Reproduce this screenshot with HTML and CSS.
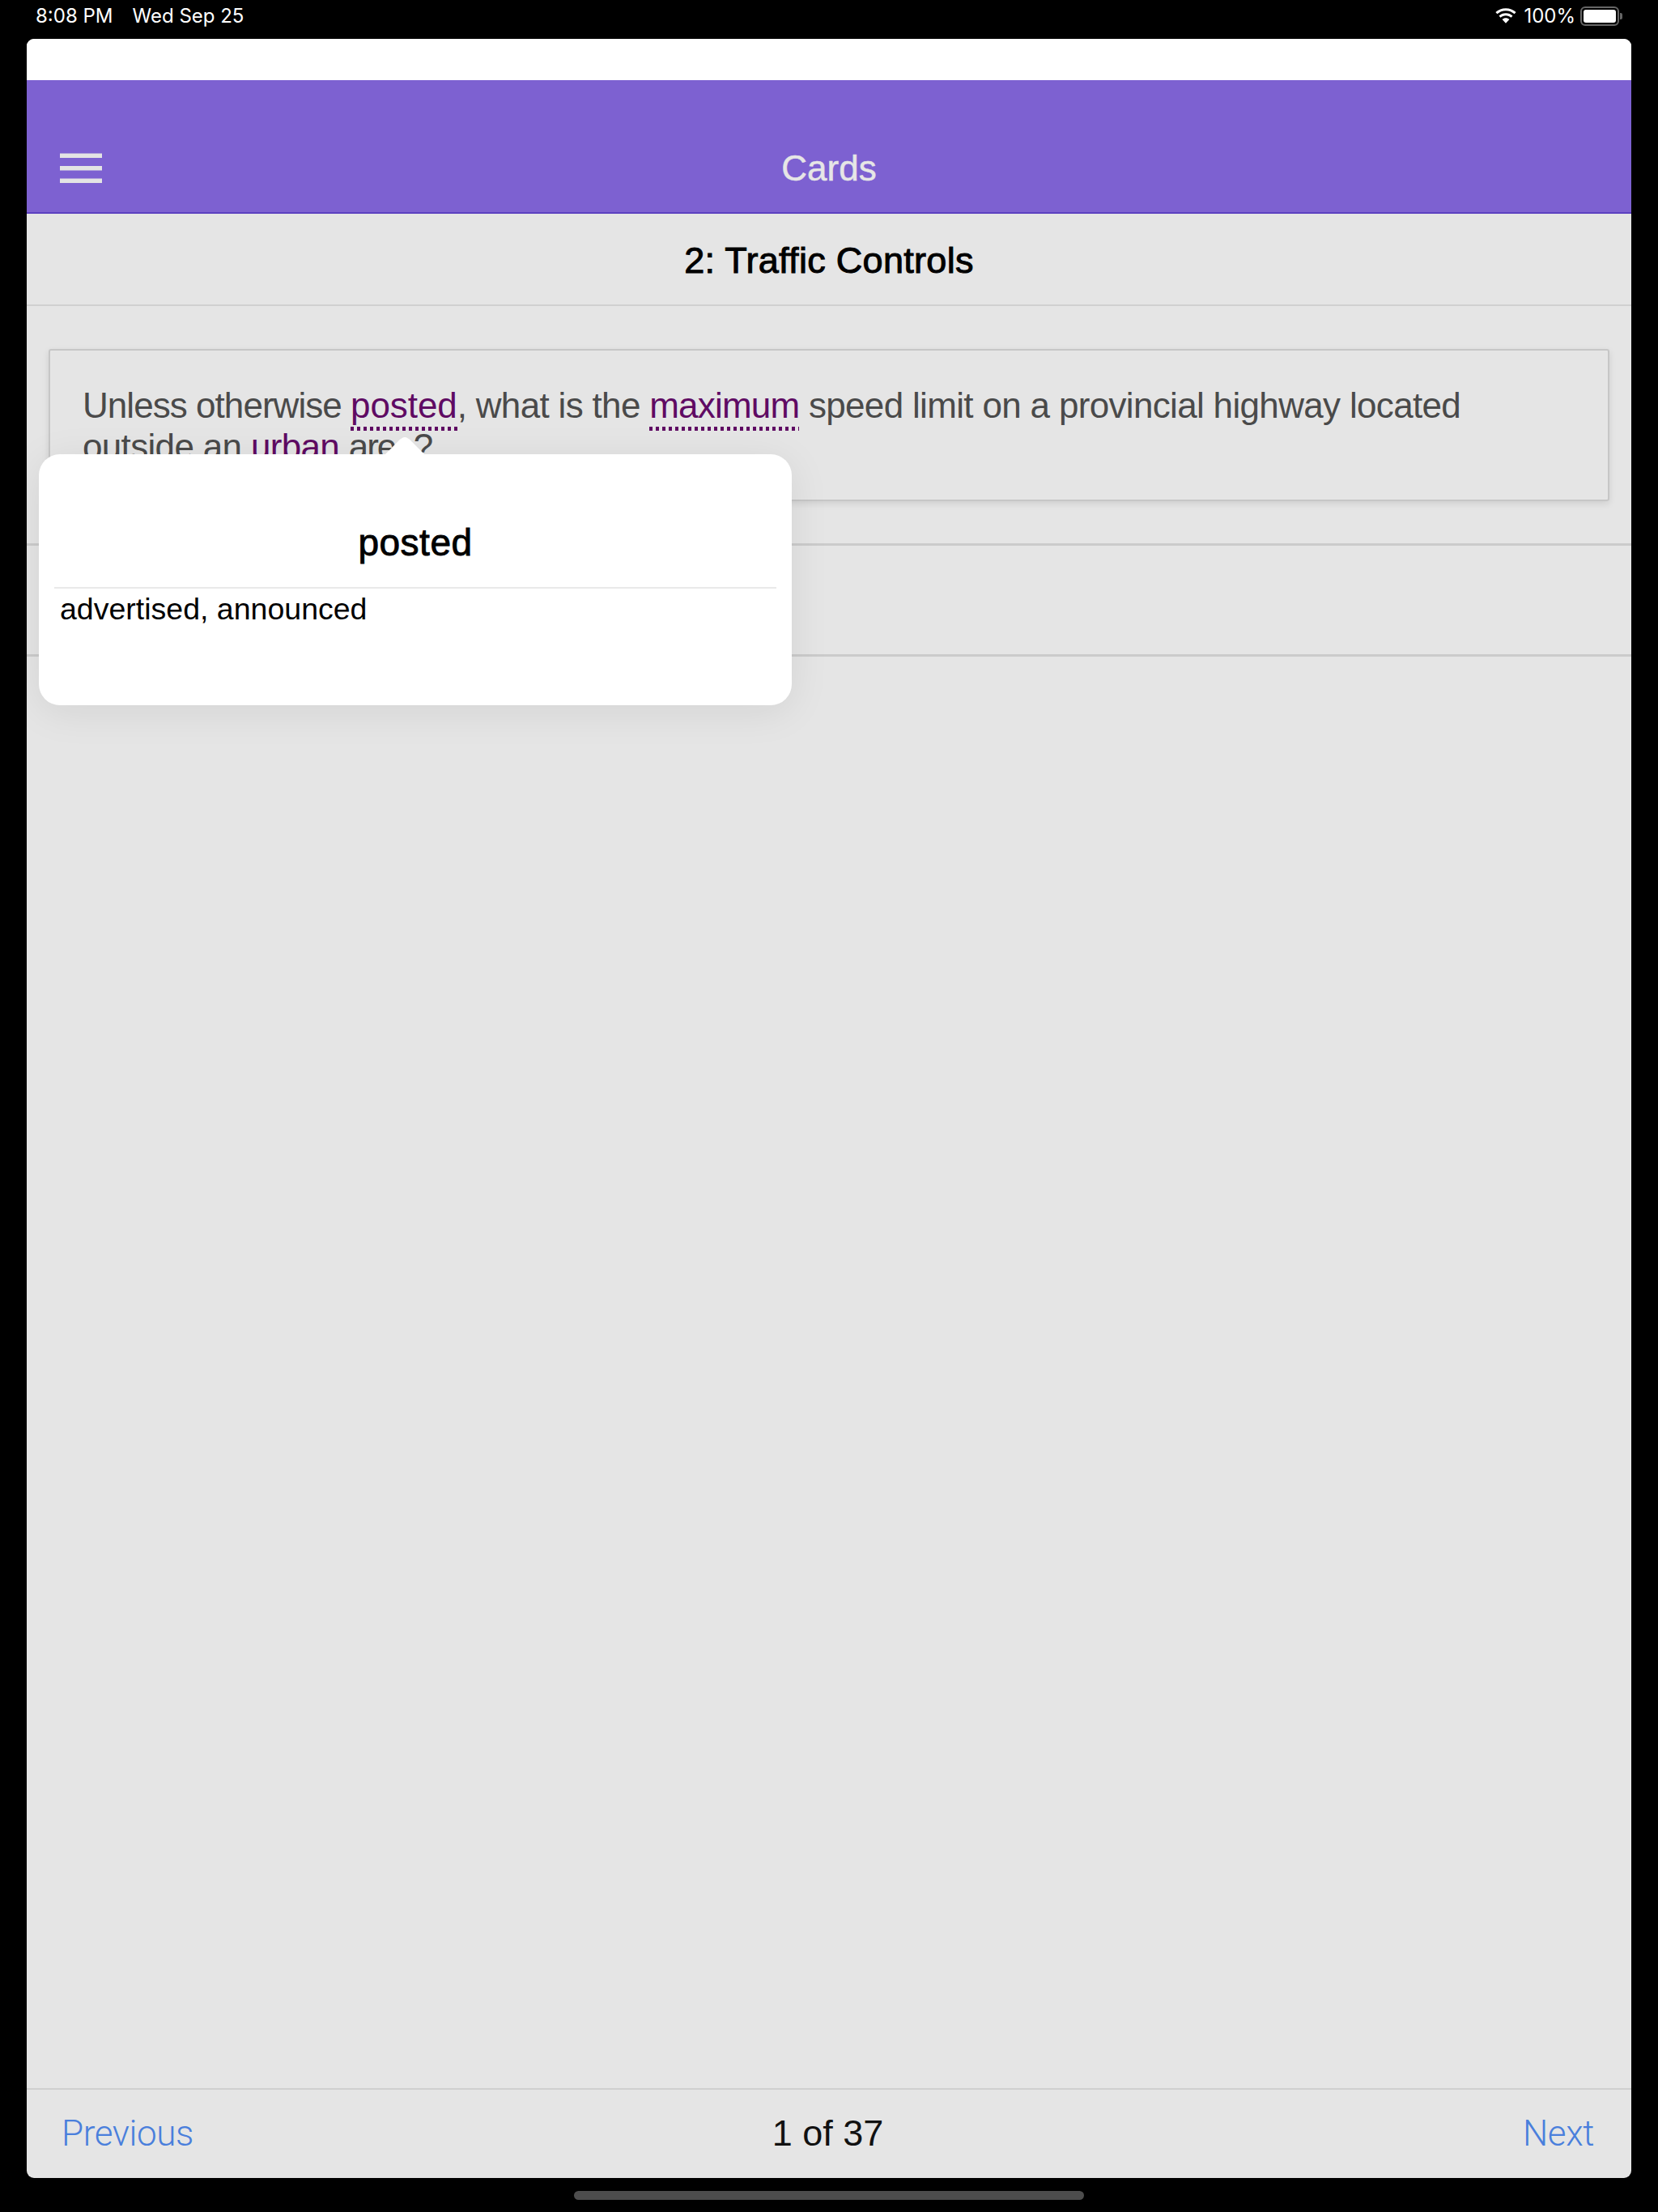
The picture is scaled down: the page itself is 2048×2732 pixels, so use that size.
FILE: index.html
```html
<!DOCTYPE html>
<html lang="en">
<head>
<meta charset="utf-8">
<title>Cards</title>
<link rel="stylesheet" href="styles.css">
</head>
<body>
<div class="status">
  <div class="status-left"><span>8:08 PM</span><span>Wed Sep 25</span></div>
  <div class="status-right">
    <svg class="wifi" viewBox="0 0 28 20" width="28" height="20"><path fill="#fff" d="M14 3.200c4.100 0 7.800 1.600 10.600 4.100l2-2.200C23.200 2 18.800.2 14 .2S4.800 2 1.400 5.100l2 2.200C6.200 4.800 9.900 3.200 14 3.200zM14 9.200c2.500 0 4.800 1 6.500 2.500l2-2.200C20.200 7.400 17.300 6.200 14 6.200s-6.200 1.200-8.500 3.300l2 2.200C9.200 10.200 11.500 9.200 14 9.200zM14 12.200c-1.700 0-3.200.6-4.400 1.700L14 18.800l4.400-4.900c-1.200-1.100-2.700-1.700-4.400-1.700z"/></svg>
    <span>100%</span>
    <div class="battery"><div class="battery-fill"></div></div>
    <div class="battery-cap"></div>
  </div>
</div>
<main class="window">
  <div class="top-strip"></div>
  <header class="navbar">
    <svg class="menu" viewBox="0 0 52 38" width="52" height="38"><path fill="#e4e4e4" d="M0 .5h52v5.500H0zM0 16h52v5.500H0zM0 31.500h52v5.500H0z"/></svg>
    <h1 class="nav-title">Cards</h1>
  </header>
  <div class="subhead">2: Traffic Controls</div>
  <section class="question">
    <div class="card">
      <p class="card-text"><span class="lead">Unless otherwise </span><span class="term term-posted">posted</span>, what is the <span class="term term-max">maximum</span> speed limit on a provincial highway located outside an <span class="term-plain">urban</span> <span class="tail">area?</span></p>
    </div>
  </section>
  <div class="answer-row"></div>
  <div class="spacer"></div>
  <footer class="pager">
    <span class="pager-link">Previous</span>
    <span class="pager-count">1 of 37</span>
    <span class="pager-link pager-next">Next</span>
  </footer>
  <div class="popover">
    <div class="popover-arrow"></div>
    <div class="popover-title">posted</div>
    <div class="popover-body">advertised, announced</div>
  </div>
</main>
<div class="home-row"><div class="home-bar"></div></div>
</body>
</html>
```
FILE: styles.css
```css
* { box-sizing: border-box; }
html, body { margin: 0; padding: 0; }
body {
  width: 2048px;
  height: 2732px;
  background: #000;
  font-family: "Liberation Sans", Arial, sans-serif;
  overflow: hidden;
}
.status {
  height: 48px;
  padding: 0 44px;
  display: flex;
  justify-content: space-between;
  align-items: flex-start;
  color: #fff;
  font-family: Inter, "Liberation Sans", sans-serif;
  font-size: 24px;
  line-height: 40px;
}
.status-left { display: flex; gap: 24px; }
.status-right { display: flex; align-items: center; height: 40px; }
.wifi { margin-right: 8px; }
.battery {
  width: 48px;
  height: 24px;
  margin-left: 6px;
  border: 2px solid #666;
  border-radius: 6px;
  padding: 2px;
}
.battery-fill { width: 100%; height: 100%; background: #fff; border-radius: 3px; }
.battery-cap { width: 3px; height: 8px; margin-left: 1px; background: #666; border-radius: 0 2px 2px 0; }
.window {
  position: relative;
  width: 1982px;
  height: 2642px;
  margin-left: 33px;
  background: #e5e5e5;
  border-radius: 9px;
  overflow: hidden;
  display: flex;
  flex-direction: column;
}
.top-strip { height: 51px; background: #fff; flex: none; }
.navbar {
  height: 165px;
  flex: none;
  background: #7d61d1;
  border-bottom: 2px solid #5b40c0;
  display: flex;
  align-items: flex-end;
  justify-content: center;
  position: relative;
  padding-bottom: 29px;
}
.menu { position: absolute; left: 41px; bottom: 35px; }
.nav-title {
  margin: 0;
  font-size: 44px;
  line-height: 50px;
  font-weight: 400;
  color: #e6e6e6;
  -webkit-text-stroke: 0.5px #e6e6e6;
}
.subhead {
  height: 114px;
  padding-top: 3px;
  flex: none;
  display: flex;
  align-items: center;
  justify-content: center;
  border-bottom: 2px solid #d0d0d0;
  font-size: 45px;
  font-weight: 400;
  letter-spacing: 0.3px;
  color: #000;
  -webkit-text-stroke: 1px #000;
}
.question {
  height: 296px;
  flex: none;
  padding: 53px 27px 0;
  border-bottom: 3px solid #cbcbcb;
}
.card {
  height: 188px;
  padding: 42px 40px 0;
  border: 2px solid #c6c6c6;
  border-radius: 3px;
  box-shadow: 0 3px 8px rgba(0,0,0,.1);
  overflow: hidden;
}
.card-text {
  margin: 0;
  font-size: 44px;
  line-height: 51px;
  letter-spacing: -0.67px;
  color: #4a4a4a;
}
.lead { letter-spacing: -0.95px; }
.term {
  color: #5f0a63;
  padding-bottom: 7px;
  background: repeating-linear-gradient(90deg, #5f0a63 0 4px, transparent 4px 8px) left bottom / 100% 5px no-repeat;
}
.term-posted { letter-spacing: -0.1px; }
.term-max { letter-spacing: -0.8px; }
.term-plain { color: #5f0a63; }
.tail { letter-spacing: -2px; }
.answer-row { height: 137px; flex: none; border-bottom: 3px solid #cbcbcb; }
.spacer { flex: 1; }
.pager {
  height: 111px;
  flex: none;
  border-top: 2px solid #cfcfcf;
  padding: 0 46px 2px 43px;
  display: grid;
  grid-template-columns: 1fr auto 1fr;
  align-items: center;
  font-size: 45px;
}
.pager-link {
  font-family: Roboto, "Liberation Sans", sans-serif;
  font-size: 44px;
  letter-spacing: -0.4px;
  font-weight: 300;
  color: #4a7fdc;
}
.pager-next { text-align: right; }
.pager-count { color: #111; }
.popover {
  position: absolute;
  left: 15px;
  top: 513px;
  width: 930px;
  height: 310px;
  background: #fff;
  border-radius: 26px;
  box-shadow: 0 8px 50px rgba(0,0,0,.08);
  padding: 84px 19px 0;
}
.popover-arrow {
  position: absolute;
  left: 427px;
  top: -21px;
  width: 50px;
  height: 22px;
  background: #fff;
  clip-path: polygon(0 100%, 38% 12%, 46% 1%, 50% 0, 54% 1%, 62% 12%, 100% 100%);
}
.popover-title {
  height: 82px;
  text-align: center;
  font-size: 46px;
  line-height: 50px;
  font-weight: 400;
  letter-spacing: 0.5px;
  color: #000;
  -webkit-text-stroke: 0.9px #000;
  border-bottom: 2px solid #e9e9e9;
}
.popover-body {
  padding: 3px 0 0 7px;
  font-size: 37.500px;
  line-height: 44px;
  color: #000;
}
.home-row { height: 42px; display: flex; justify-content: center; padding-top: 16px; }
.home-bar { width: 630px; height: 11px; border-radius: 5.500px; background: #4d4d4d; }
```
